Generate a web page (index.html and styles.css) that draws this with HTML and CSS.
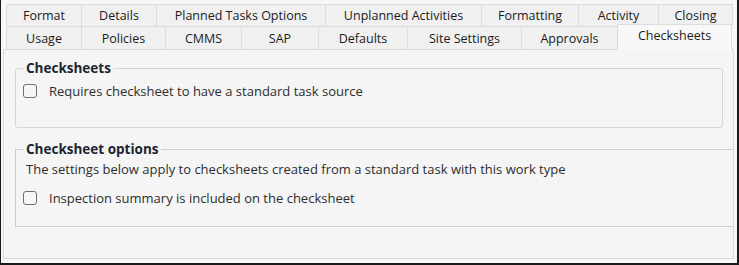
FILE: index.html
```html
<!DOCTYPE html>
<html>
<head>
<meta charset="utf-8">
<link rel="stylesheet" href="styles.css">
</head>
<body>
<div class="window">
  <div class="tabs">
    <div class="tab-row">
      <div class="tab w-format">Format</div>
      <div class="tab w-details">Details</div>
      <div class="tab w-planned">Planned Tasks Options</div>
      <div class="tab w-unplanned">Unplanned Activities</div>
      <div class="tab w-formatting">Formatting</div>
      <div class="tab w-activity">Activity</div>
      <div class="tab w-closing">Closing</div>
    </div>
    <div class="tab-row row2">
      <div class="tab w-usage">Usage</div>
      <div class="tab w-policies">Policies</div>
      <div class="tab w-cmms">CMMS</div>
      <div class="tab w-sap">SAP</div>
      <div class="tab w-defaults">Defaults</div>
      <div class="tab w-site">Site Settings</div>
      <div class="tab w-approvals">Approvals</div>
      <div class="tab active w-checksheets">Checksheets</div>
    </div>
  </div>
  <div class="panel">
    <fieldset class="group group-first">
      <legend>Checksheets</legend>
      <label class="check"><span class="box"></span><span>Requires checksheet to have a standard task source</span></label>
    </fieldset>
    <fieldset class="group group-second">
      <legend>Checksheet options</legend>
      <p class="note">The settings below apply to checksheets created from a standard task with this work type</p>
      <label class="check"><span class="box"></span><span>Inspection summary is included on the checksheet</span></label>
    </fieldset>
  </div>
</div>
</body>
</html>
```

FILE: styles.css
```css
* { box-sizing: border-box; }
html, body { margin: 0; padding: 0; background: #ffffff; }
body { font-family: "Open Sans", "Noto Sans", sans-serif; font-size: 13px; color: #2a2a2a; }

.window {
  width: 739px;
  height: 265px;
  background: #f7f7f7;
  border-left: 1px solid #1a1a1a;
  border-right: 2px solid #1a1a1a;
  border-bottom: 2px solid #1a1a1a;
  display: flex;
  flex-direction: column;
}

.tabs {
  padding: 4px 0 0 5px;
  display: flex;
  flex-direction: column;
}

.tab-row {
  display: flex;
  height: 22px;
}
.tab-row.row2 { height: 23px; }

.tab {
  display: flex;
  align-items: center;
  justify-content: center;
  background: #f0f0f0;
  color: #1b1b1b;
  font-size: 12.5px;
  border-top: 1px solid #dcdcdc;
  border-right: 1px solid #dcdcdc;
  line-height: 16px;
  padding-top: 1px;
}
.tab:first-child { border-left: 1px solid #dcdcdc; }

.tab.active {
  position: relative;
  z-index: 1;
  margin-top: -2px;
  height: 26px;
  background: #f8f8f8;
  align-items: flex-start;
  padding-top: 3px;
  border-left: 1px solid #dcdcdc;
  margin-left: -1px;
}

.w-format { width: 76px; }
.w-details { width: 75px; }
.w-planned { width: 169px; }
.w-unplanned { width: 156px; }
.w-formatting { width: 97px; }
.w-activity { width: 80px; }
.w-closing { width: 74px; }

.w-usage { width: 76px; }
.w-policies { width: 84px; }
.w-cmms { width: 76px; }
.w-sap { width: 77px; }
.w-defaults { width: 89px; }
.w-site { width: 114px; }
.w-approvals { width: 96px; }
.w-checksheets { width: 115px; }

.panel {
  margin: 0 3px 4px 2px;
  flex: 1;
  background: #f5f5f5;
  border: 1px solid #dadada;
  padding: 10px 0 0 11px;
  display: flex;
  flex-direction: column;
}

.group {
  margin: 0;
  border: 1px solid #d3d7dc;
  border-radius: 3px;
  min-width: 0;
}
.group legend {
  font-weight: 700;
  font-size: 13.5px;
  line-height: 16px;
  color: #1c2431;
  padding: 0 2px;
  margin-left: 1px;
}

.group-first {
  margin-right: 10px;
  padding: 7px 0 28px 7px;
}

.group-second {
  margin-top: 13px;
  border-right: none;
  border-radius: 0;
  border-color: #cbcfd4;
  padding: 3px 0 20px 10px;
}
.group-second legend { margin-left: -2px; }

.note {
  margin: 0 0 12px 0;
  line-height: 18px;
  color: #2d2d2d;
}

.check {
  display: flex;
  align-items: center;
  gap: 12px;
  line-height: 16px;
  color: #2d2d2d;
}
.group-second .check { margin-left: -3px; }

.box {
  width: 14px;
  height: 14px;
  border: 1px solid #6f6f6f;
  border-radius: 3px;
  background: #f6f6f6;
  flex: none;
}
```
